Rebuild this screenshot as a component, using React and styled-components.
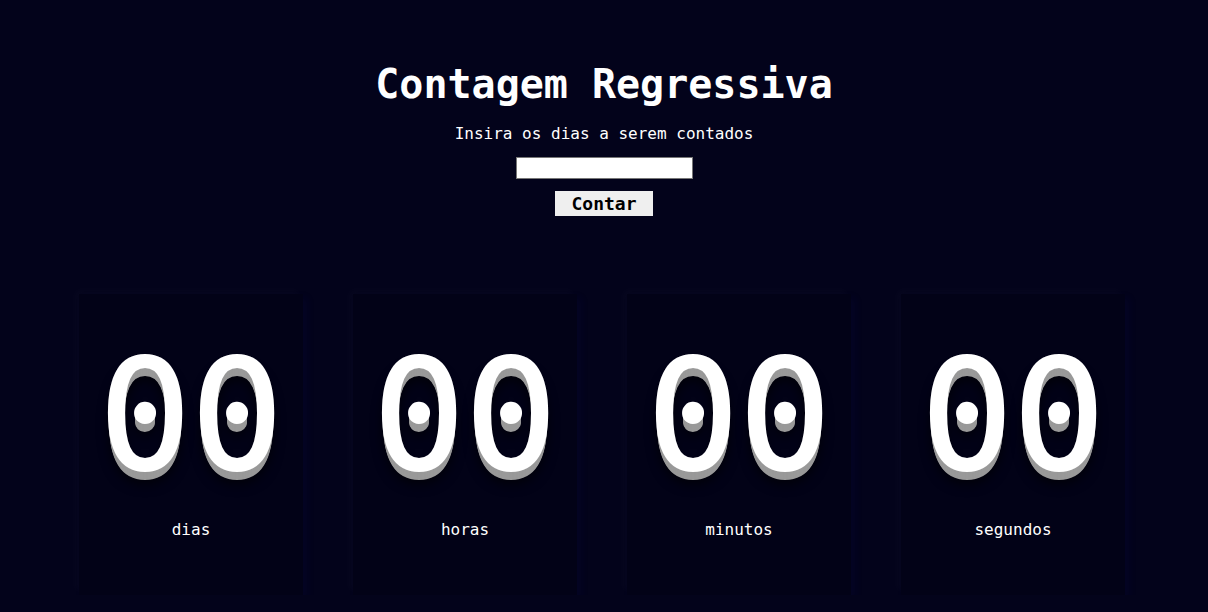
import React, { useState } from 'react'
import styled, { createGlobalStyle } from 'styled-components'

const GlobalStyle = createGlobalStyle`
body {
  margin: 0;
  background: #03031b;
  color: #ffffff;
  font-family: "DejaVu Sans Mono", "Liberation Mono", monospace;
}
`

const Page = styled.div`
display: flex;
flex-direction: column;
align-items: center;
padding-top: 62px;
`

const Title = styled.h1`
margin: 0;
font-size: 40px;
line-height: 45px;
font-weight: bold;
`

const Subtitle = styled.p`
margin: 18px 0 0;
font-size: 16px;
line-height: 18px;
`

const DaysInput = styled.input`
margin-top: 14px;
width: 177px;
height: 22px;
box-sizing: border-box;
border: 1px solid #767676;
background: #ffffff;
padding: 0 4px;
font-family: inherit;
`

const CountButton = styled.button`
margin-top: 12px;
width: 98px;
height: 25px;
border: none;
background: #efefef;
color: #000000;
font-family: inherit;
font-size: 18px;
font-weight: bold;
padding: 0;
cursor: pointer;
`

const Cards = styled.div`
display: flex;
justify-content: center;
gap: 50px;
margin-top: 78px;
margin-right: 4px;
`

const Card = styled.div`
width: 224px;
height: 301px;
box-sizing: border-box;
padding-top: 46px;
background: #020217;
display: flex;
flex-direction: column;
align-items: center;
box-shadow: -4px -4px 8px rgba(255, 255, 255, 0.025), 4px 4px 8px rgba(20, 20, 130, 0.1);
`

const Digits = styled.div`
font-size: 153px;
line-height: 153px;
color: #ffffff;
-webkit-text-stroke: 2px #ffffff;
text-shadow: 0 1px 0 #999, 0 2px 0 #999, 0 3px 0 #999, 0 4px 0 #999, 0 5px 0 #999,
  0 6px 0 #999, 0 7px 0 #999, 0 8px 0 #999, 0 9px 0 #999, 0 13px 12px rgba(0, 0, 0, 0.7);
`

const Label = styled.div`
margin-top: 27px;
font-size: 16px;
line-height: 20px;
`

const units = ['dias', 'horas', 'minutos', 'segundos']

export default function App () {
  const [days, setDays] = useState('')
  const [time] = useState({ dias: 0, horas: 0, minutos: 0, segundos: 0 })

  const pad = n => String(n).padStart(2, '0')

  return (
    <Page>
      <GlobalStyle />
      <Title>Contagem Regressiva</Title>
      <Subtitle>Insira os dias a serem contados</Subtitle>
      <DaysInput type='number' value={days} onChange={e => setDays(e.target.value)} />
      <CountButton>Contar</CountButton>
      <Cards>
        {units.map(unit => (
          <Card key={unit}>
            <Digits>{pad(time[unit])}</Digits>
            <Label>{unit}</Label>
          </Card>
        ))}
      </Cards>
    </Page>
  )
}
